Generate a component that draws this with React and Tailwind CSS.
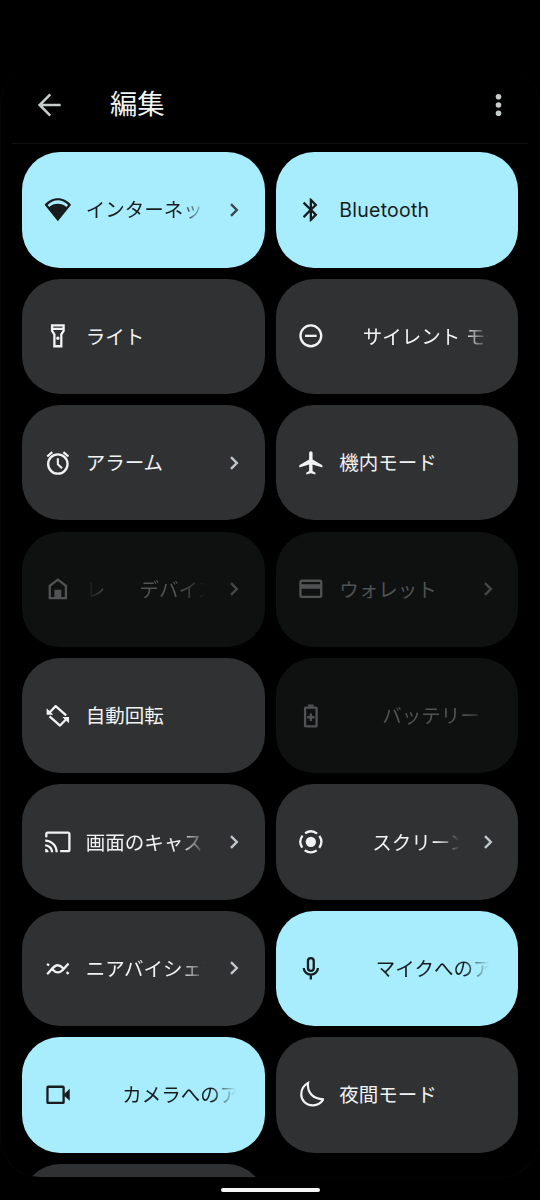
import React from "react";

const S = "h-[27.7px] w-[27.7px] shrink-0";

const P = ({ d }) => (
  <svg viewBox="0 0 24 24" className={S} fill="currentColor" fillRule="evenodd"><path d={d} /></svg>
);
const L = ({ children, w = 2 }) => (
  <svg viewBox="0 0 24 24" className={S} fill="none" stroke="currentColor" strokeWidth={w}>{children}</svg>
);

const icons = {
  wifi: <P d="M12 1.9C7.5 1.9 3.4 4.1.5 7.5L12 21.8 23.5 7.5C20.6 4.1 16.5 1.9 12 1.9zM3.1 7.7C5.7 5.2 8.8 3.7 12 3.7s6.3 1.5 8.9 4L19.4 9.5C17.4 7.7 14.8 6.7 12 6.7s-5.4 1-7.4 2.8z" />,
  bluetooth: <P d="M17.71 7.71L12 2h-1v7.59L6.41 5 5 6.41 10.59 12 5 17.59 6.41 19 11 14.41V22h1l5.71-5.71-4.3-4.29 4.3-4.29zM13 5.83l1.88 1.88L13 9.59V5.83zm1.88 10.46L13 18.17v-3.76l1.88 1.88z" />,
  torch: <P d="M18 2H6v6l2 3v11h8V11l2-3V2zM16 4v1H8V4h8zM14 10.4V20h-4v-9.6L8 7.4V7h8v.4l-2 3zM12 12.5a1.5 1.5 0 100 3 1.5 1.5 0 000-3z" />,
  dnd: <L><circle cx="12" cy="12" r="9" /><path d="M7 12h10" /></L>,
  alarm: <L><circle cx="12" cy="13" r="8.4" /><path d="M12 8v5.2l3.6 3.5" strokeWidth="1.8" /><path d="M2.8 6.5L7.2 2.7M21.2 6.5L16.8 2.7" /></L>,
  plane: <P d="M22 16v-2l-8.5-5V3.5c0-.83-.67-1.5-1.5-1.5s-1.5.67-1.5 1.5V9L2 14v2l8.5-2.5V19L8 20.5V22l4-1 4 1v-1.5L13.5 19v-5.5L22 16z" />,
  home: <L><path d="M5 20.1V9.3L12 4l7 5.3v10.8z" /><path d="M9 12.8h6V20H9z" fill="currentColor" stroke="none" /></L>,
  card: <P d="M20 4H4c-1.11 0-1.99.89-1.99 2L2 18c0 1.11.89 2 2 2h16c1.11 0 2-.89 2-2V6c0-1.11-.89-2-2-2zm0 14H4v-6h16v6zm0-10H4V6h16v2z" />,
  rotate: (
    <L>
      <path d="M4.8 9.1L10.1 3.6l9.1 8M19.2 14.9l-5.3 5.5-9.1-8" strokeLinejoin="round" />
      <path d="M2.3 5.5v5.6h5.8zM21.7 18.5v-5.6h-5.8z" fill="currentColor" stroke="none" />
    </L>
  ),
  battery: <L><rect x="7" y="4.9" width="10" height="16.2" rx=".5" /><path d="M9.5 3.2h5M12 10v6.4M8.8 13.2h6.4" /></L>,
  cast: <P d="M21 3H3c-1.1 0-2 .9-2 2v3h2V5h18v14h-7v2h7c1.1 0 2-.9 2-2V5c0-1.1-.9-2-2-2zM1 18v3h3c0-1.66-1.34-3-3-3zm0-4v2c2.76 0 5 2.24 5 5h2c0-3.87-3.13-7-7-7zm0-4v2c4.97 0 9 4.03 9 9h2c0-6.08-4.93-11-11-11z" />,
  record: <L><circle cx="12" cy="12" r="9" strokeDasharray="11 3.137" transform="rotate(-35 12 12)" /><circle cx="12" cy="12" r="4.5" fill="currentColor" stroke="none" /></L>,
  nearby: <L><path d="M2.7 16.6C6.2 13.6 8 8.9 12 8.9c2 0 3.4 1.2 4.8 2.8M21.3 7.4C17.8 10.4 16 15.1 12 15.1c-2 0-3.4-1.2-4.8-2.8M2.7 7.6l1.7 1.5M19.6 14.9l1.7 1.5" /></L>,
  mic: <L><rect x="9.5" y="2.7" width="5" height="11" rx="2.5" /><path d="M5.9 11.2c0 3.3 2.7 5.8 6.1 5.8s6.1-2.5 6.1-5.8M12 17v4.2" /></L>,
  camera: <L><rect x="3" y="5" width="14" height="14" rx=".6" /><path d="M17.5 11.2L22.3 6.8v10.4l-4.8-4.4z" fill="currentColor" stroke="none" /></L>,
  moon: <L w={1.9}><path d="M9.6 1.6C9.1 5.8 10.2 9.6 12.7 12c2.3 2.2 5.9 3.6 10.1 3.9-2.1 3.7-5.6 5.3-9.2 5.2C7.6 21 3.6 16.6 3.7 11.2 3.8 7.2 6 3.6 9.6 1.6z" /></L>,
};

const tiles = [
  { icon: "wifi", text: "インターネット", on: true, arrow: true },
  { icon: "bluetooth", text: "Bluetooth", on: true, latin: true },
  { icon: "torch", text: "ライト" },
  { icon: "dnd", text: "サイレント モード", shift: "pl-[23.5px]" },
  { icon: "alarm", text: "アラーム", arrow: true },
  { icon: "plane", text: "機内モード" },
  { icon: "home", before: "レ", text: "デバイス", off: true, arrow: true },
  { icon: "card", text: "ウォレット", off: true, arrow: true },
  { icon: "rotate", text: "自動回転" },
  { icon: "battery", text: "バッテリー セーバー", off: true, shift: "pl-[43px]" },
  { icon: "cast", text: "画面のキャスト", arrow: true },
  { icon: "record", text: "スクリーン", arrow: true, shift: "pl-[33px]" },
  { icon: "nearby", text: "ニアバイシェア", arrow: true },
  { icon: "mic", text: "マイクへのアクセス", on: true, shift: "pl-[36.5px]" },
  { icon: "camera", text: "カメラへのアクセス", on: true, shift: "pl-[36.5px]" },
  { icon: "moon", text: "夜間モード" },
];

const FADE = "[mask-image:linear-gradient(to_right,#000_calc(100%-25px),transparent)]";
const FADE_BOTH = "[mask-image:linear-gradient(to_right,transparent,#000_22px,#000_calc(100%-25px),transparent)]";

function Tile({ t, right }) {
  const color = t.on ? "bg-[#a8edfd] text-[#191c1d]" : t.off ? "bg-[#0f1111] text-[#505353]" : "bg-[#303132] text-[#f1f3f3]";
  const arrow = t.on ? "text-[#3f484a]" : t.off ? "text-[#454848]" : "text-[#bfc8ca]";
  const fades = t.shift || (t.text.length > 5 && !t.latin);
  return (
    <div className={`flex h-[115.35px] items-center rounded-[38px] ${right ? "pl-[21.3px]" : "pl-[22px]"} ${color} ${t.arrow ? "pr-[22.5px]" : "pr-[29px]"}`}>
      {icons[t.icon]}
      <div className={`min-w-0 flex-1 ${right ? "ml-[14.8px]" : "ml-[14px]"} ${t.latin ? "" : "pt-[1.1px]"}`}>
        <div className={`overflow-hidden whitespace-nowrap text-[19.5px] leading-[30px] ${t.before ? `flex ${FADE_BOTH}` : fades ? FADE : ""} ${t.shift || ""}`}>
          {t.before && <span className="w-[53.7px] shrink-0">{t.before}</span>}
          <span className={t.latin ? "tracking-[0.25px]" : ""}>{t.text}</span>
        </div>
      </div>
      {t.arrow && (
        <svg viewBox="0 0 16 16" className={`ml-[20px] h-[16px] w-[16px] shrink-0 ${arrow}`} fill="none" stroke="currentColor" strokeWidth="2.4">
          <path d="M5 2.2l5.8 5.8L5 13.8" />
        </svg>
      )}
    </div>
  );
}

export default function App() {
  return (
    <div className="flex h-[1200px] w-[540px] flex-col overflow-hidden bg-black pt-[66px] font-['Inter','Noto_Sans_CJK_JP',sans-serif]" lang="ja">
      <main className="h-[1112px] shrink-0 overflow-hidden rounded-[40px] border border-t-0 border-[#050606]">
        <header className="mx-[11px] flex h-[78px] items-center border-b border-[#101111] pl-[23px] pr-[15.5px]">
          <svg viewBox="0 0 24 24" className="h-[28px] w-[28px]" fill="none" stroke="#c4cccc" strokeWidth="2.2">
            <path d="M22 12H4.5M13.1 2.9L4 12l9.100 9.100" />
          </svg>
          <h1 className="ml-[47px] flex-1 text-[27.3px] leading-[40px] text-[#f1f3f3]">編集</h1>
          <svg viewBox="0 0 28 28" className="h-[28px] w-[28px]" fill="#c4cccc">
            <circle cx="13.5" cy="5.7" r="2.8" /><circle cx="13.5" cy="14" r="2.8" /><circle cx="13.5" cy="22.3" r="2.8" />
          </svg>
        </header>
        <section className="grid grid-cols-2 gap-x-[11px] gap-y-[11.1px] px-[21px] pt-[8.2px]">
          {tiles.map((t, i) => <Tile key={t.icon} t={t} right={i % 2 === 1} />)}
          <div className="h-[115px] rounded-[38px] bg-[#303132]" />
        </section>
      </main>
      <div className="mx-auto mt-[10.4px] h-[3.4px] w-[99px] shrink-0 rounded-full bg-[#f5f5f5]" />
    </div>
  );
}
